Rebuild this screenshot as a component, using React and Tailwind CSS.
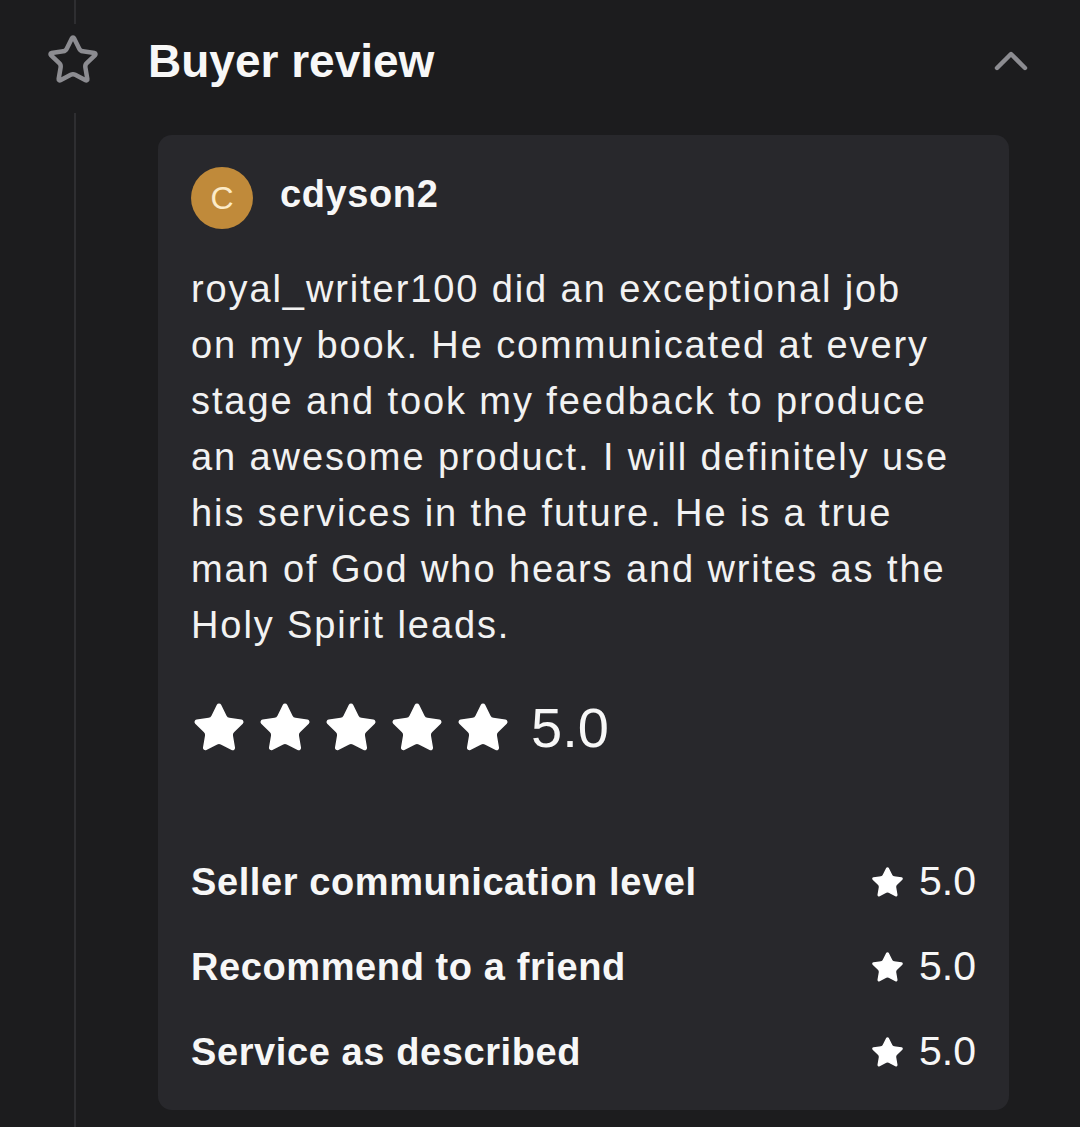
import React from "react";
import { Star, ChevronUp } from "lucide-react";

const lines = [
  "royal_writer100 did an exceptional job",
  "on my book. He communicated at every",
  "stage and took my feedback to produce",
  "an awesome product. I will definitely use",
  "his services in the future. He is a true",
  "man of God who hears and writes as the",
  "Holy Spirit leads.",
];

const breakdown = [
  "Seller communication level",
  "Recommend to a friend",
  "Service as described",
];

const App = () => {
  return (
    <div
      className="min-h-screen w-[1080px] h-[1127px] bg-[#1c1c1e] flex text-[#f7f7f7]"
      style={{ fontFamily: '"Liberation Sans", Arial, sans-serif' }}
    >
      {/* timeline column */}
      <div className="w-[150px] flex flex-col items-center">
        <div className="h-[24px] w-[2px] bg-[#2e2e31]" />
        <Star size={54} strokeWidth={2} className="text-[#8c8c91] -ml-[4px] mt-[9px]" />
        <div className="flex-1 w-[2px] bg-[#2e2e31] mt-[26px]" />
      </div>

      <div className="flex-1 flex flex-col">
        {/* header */}
        <div className="h-[124px] flex items-center justify-between pr-[41px] -mt-[1px]">
          <h2 className="text-[46px] font-bold -ml-[2px]">Buyer review</h2>
          <ChevronUp size={56} strokeWidth={1.9} className="text-[#8c8c91] -mt-[1px]" />
        </div>

        {/* review card */}
        <div className="ml-[8px] mr-[71px] mt-[12px] bg-[#28282c] rounded-[14px] pl-[33px] pr-[33px] pt-[32px] h-[975px]">
          <div className="flex items-center gap-[27px]">
            <div className="w-[62px] h-[62px] rounded-full bg-[#c08a3a] flex items-center justify-center text-[#fcebc8] text-[32px]">
              C
            </div>
            <span className="text-[38px] font-bold tracking-[0.6px] -mt-[8px]">cdyson2</span>
          </div>

          <p className="mt-[32px] text-[38px] leading-[56px] tracking-[1.9px] text-[#f2f2f2]">
            {lines.map((l, i) => (
              <span key={i} className="block whitespace-nowrap">
                {l}
              </span>
            ))}
          </p>

          <div className="mt-[47px] flex items-center">
            <div className="flex gap-[10px]">
              {[0, 1, 2, 3, 4].map((i) => (
                <Star key={i} size={56} fill="currentColor" strokeWidth={1} className="text-white" />
              ))}
            </div>
            <span className="ml-[20px] text-[56px] leading-none">5.0</span>
          </div>

          <div className="mt-[105px] flex flex-col gap-[43px]">
            {breakdown.map((b) => (
              <div key={b} className="flex items-center justify-between h-[42px]">
                <span className="text-[38px] font-bold tracking-[0.6px]">{b}</span>
                <span className="flex items-center gap-[14px] text-[41px]">
                  <Star size={35} fill="currentColor" strokeWidth={1} className="text-white" />
                  5.0
                </span>
              </div>
            ))}
          </div>
        </div>
      </div>
    </div>
  );
};

export default App;
